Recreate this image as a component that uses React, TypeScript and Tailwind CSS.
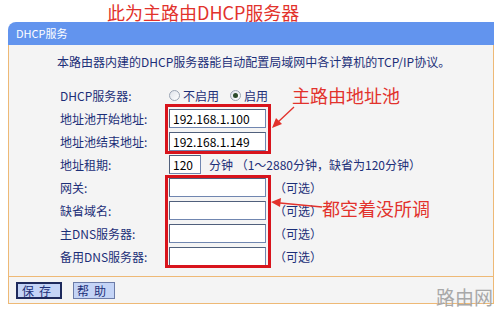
import React from "react";

const font = { fontFamily: '"Noto Sans CJK SC", "Liberation Sans", sans-serif' };

function Radio({ checked }: { checked?: boolean }) {
  return (
    <span className="inline-flex h-[11px] w-[11px] items-center justify-center rounded-full border border-[#9aa4b4] bg-gradient-to-br from-[#dfe3ea] to-white">
      {checked && <span className="h-[5px] w-[5px] rounded-full bg-[#2a4a2a]" />}
    </span>
  );
}

function Field({ value = "", w = "w-[97px]" }: { value?: string; w?: string }) {
  return (
    <div className={`h-[19px] ${w} border border-[#7086b0] border-t-[#50607c] border-l-[#50607c] bg-white px-[3px] text-[12px] leading-[17px] text-black`}>
      {value}
    </div>
  );
}

function Opt() {
  return (
    <div className="flex items-center gap-[8px]">
      <Field />
      <span className="text-[12px]">（可选）</span>
    </div>
  );
}

const rows: { label: string; content: React.ReactNode }[] = [
  {
    label: "DHCP服务器:",
    content: (
      <div className="flex items-center gap-[3px] text-[12px]">
        <Radio />
        <span className="mr-[8px]">不启用</span>
        <Radio checked />
        <span>启用</span>
      </div>
    ),
  },
  { label: "地址池开始地址:", content: <Field value="192.168.1.100" /> },
  { label: "地址池结束地址:", content: <Field value="192.168.1.149" /> },
  {
    label: "地址租期:",
    content: (
      <div className="flex items-center gap-[8px]">
        <Field value="120" w="w-[32px]" />
        <span className="text-[12px]">分钟 （1～2880分钟，缺省为120分钟）</span>
      </div>
    ),
  },
  { label: "网关:", content: <Opt /> },
  { label: "缺省域名:", content: <Opt /> },
  { label: "主DNS服务器:", content: <Opt /> },
  { label: "备用DNS服务器:", content: <Opt /> },
];

export default function App() {
  return (
    <div className="relative h-[311px] w-[500px] overflow-hidden bg-white" style={font}>
      <div className="h-[22px] pl-[107px] pt-[3px] text-[18px] leading-[19px] text-[#e2322c]">此为主路由DHCP服务器</div>

      <div className="ml-[8px] w-[486px]">
        <div className="h-[23px] rounded-tl-[8px] bg-[#6294ee] pl-[8px] text-[11px] leading-[23px] text-white">DHCP服务</div>
        <div className="relative border-x border-b border-[#eeb976] bg-[#f4f4f4] text-[#1c2f78]">
          <div className="pl-[48px] pt-[9px] text-[12px] leading-[16px]">本路由器内建的DHCP服务器能自动配置局域网中各计算机的TCP/IP协议。</div>
          <div className="mt-[14px] pb-[8px] pl-[51px]">
            {rows.map((r) => (
              <div key={r.label} className="flex h-[23px] items-center">
                <div className="w-[109px] text-[12px]">{r.label}</div>
                {r.content}
              </div>
            ))}
          </div>

          <div className="flex h-[27px] items-center gap-[11px] border-t border-[#eeb976] pl-[7px]">
            <button className="h-[17px] w-[46px] border-2 border-[#1e2a5c] bg-[#c4d4f6] text-[12px] leading-[13px] tracking-[5px] text-[#1c2f78]">保存</button>
            <button className="h-[17px] w-[42px] border border-[#6c7ca8] bg-[#c4d4f6] text-[12px] leading-[15px] tracking-[5px] text-[#1c2f78]">帮助</button>
          </div>

          {/* red highlight boxes */}
          <div className="absolute left-[156px] top-[59px] h-[50px] w-[106px] border-[3px] border-[#d8141c]" />
          <div className="absolute left-[156px] top-[130px] h-[93px] w-[106px] border-[3px] border-[#d8141c]" />
        </div>
      </div>

      {/* annotations */}
      <div className="absolute left-[292px] top-[84px] text-[18px] leading-[22px] text-[#e2322c]">主路由地址池</div>
      <div className="absolute left-[322px] top-[197px] text-[18px] leading-[22px] text-[#e2322c]">都空着没所调</div>
      <svg className="absolute left-0 top-0" width="500" height="311">
        <line x1="294" y1="107" x2="277" y2="123" stroke="#e2322c" strokeWidth="1.3" />
        <polygon points="272,128 276,118 282,124" fill="#e2322c" />
        <line x1="322" y1="207" x2="280" y2="203" stroke="#e2322c" strokeWidth="1.3" />
        <polygon points="271,202 281,198 280,207" fill="#e2322c" />
      </svg>
      <div className="absolute left-[436px] top-[286px] text-[19px] leading-[22px] text-[#a8a8a8]">路由网</div>
    </div>
  );
}
